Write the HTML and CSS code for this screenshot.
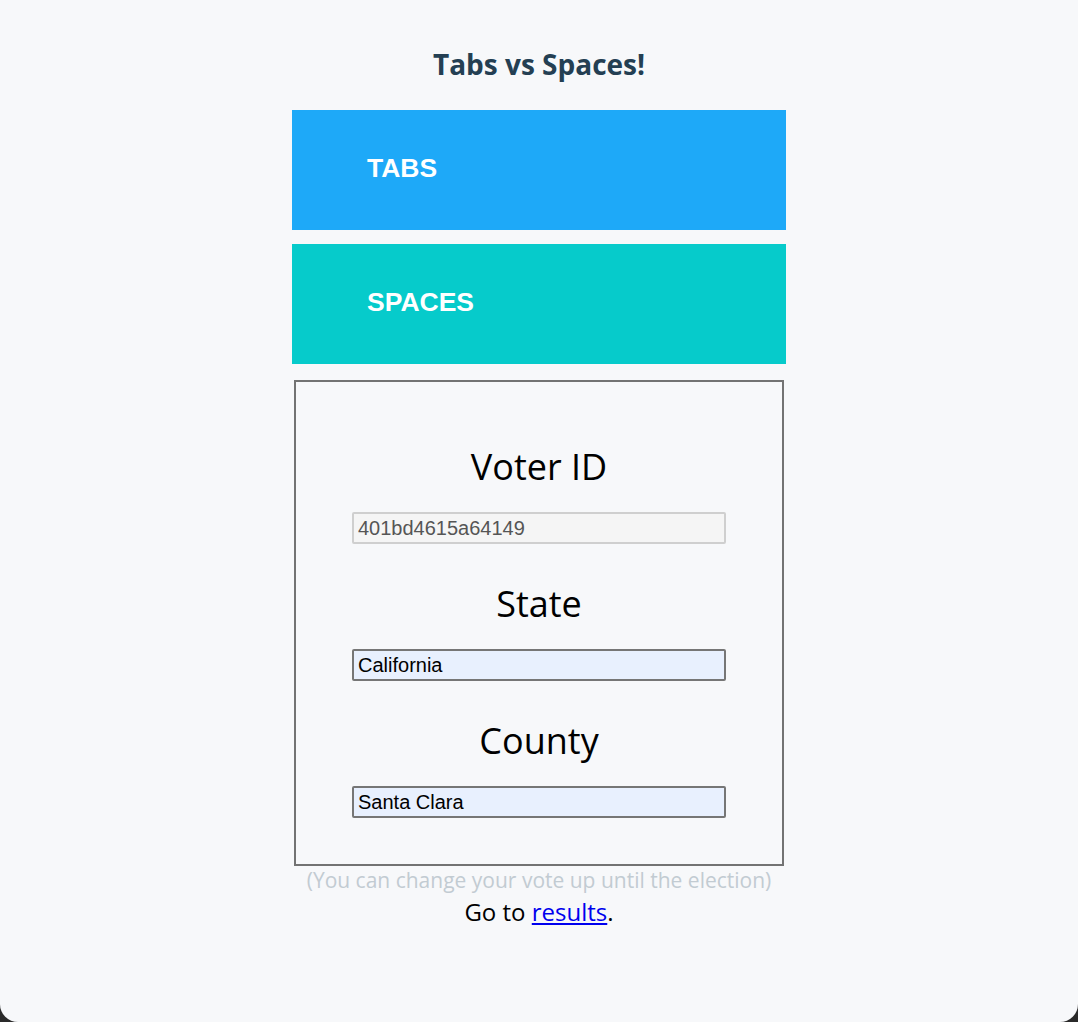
FILE: index.html
```html
<!DOCTYPE html>
<html lang="en">
<head>
<meta charset="utf-8">
<title>Tabs vs Spaces!</title>
<link rel="stylesheet" href="styles.css">
</head>
<body>
<div class="window">
  <h1 class="title">Tabs vs Spaces!</h1>
  <button class="vote vote-tabs" type="button">TABS</button>
  <button class="vote vote-spaces" type="button">SPACES</button>
  <form class="voter-form">
    <label class="field-label" for="voter-id">Voter ID</label>
    <input class="field field-readonly" id="voter-id" type="text" value="401bd4615a64149" readonly>
    <label class="field-label" for="state">State</label>
    <input class="field field-filled" id="state" type="text" value="California">
    <label class="field-label" for="county">County</label>
    <input class="field field-filled" id="county" type="text" value="Santa Clara">
  </form>
  <p class="note">(You can change your vote up until the election)</p>
  <p class="goto">Go to <a href="#" class="link">results</a>.</p>
</div>
</body>
</html>
```

FILE: styles.css
```css
html {
  background: #2a2a2a;
}
body {
  margin: 0;
  font-family: "Open Sans", "Liberation Sans", sans-serif;
}
.window {
  height: 1022px;
  box-sizing: border-box;
  background: #f7f8fa;
  border-radius: 0 0 18px 18px;
  display: flex;
  flex-direction: column;
  align-items: center;
  padding-top: 45px;
}
.title {
  margin: 0 0 27px;
  font-size: 28px;
  line-height: 38px;
  font-weight: 700;
  color: #243f53;
}
.vote {
  width: 494px;
  height: 120px;
  border: 0;
  margin: 0 0 14px;
  padding: 0 0 4px 75px;
  text-align: left;
  font-family: "Liberation Sans", Arial, sans-serif;
  font-weight: 700;
  font-size: 26.5px;
  color: #ffffff;
}
.vote-tabs {
  background: #1ea9f8;
}
.vote-spaces {
  background: #06cbcb;
  margin-bottom: 16px;
}
.voter-form {
  width: 490px;
  box-sizing: border-box;
  border: 2px solid #737373;
  display: flex;
  flex-direction: column;
  align-items: center;
  padding: 25px 0 46px;
  margin: 0;
}
.field-label {
  margin: 35px 0 21px;
  font-size: 36px;
  line-height: 49px;
  color: #000;
}
.field {
  width: 374px;
  height: 32px;
  box-sizing: border-box;
  margin: 0;
  padding: 1px 4px;
  font-family: "Liberation Sans", Arial, sans-serif;
  font-size: 20px;
  border-radius: 2px;
  outline: none;
}
.field-readonly {
  background: #f5f5f5;
  border: 2px solid #cfcfcf;
  color: #555555;
}
.field-filled {
  background: #e8f0fe;
  border: 2px solid #767676;
  color: #000;
}
.note {
  margin: 0;
  font-size: 21px;
  line-height: 29px;
  color: #c2cbd2;
}
.goto {
  margin: 0;
  font-size: 24px;
  line-height: 33px;
  color: #000;
}
.link {
  color: #0000ee;
  text-decoration: underline;
}
```
